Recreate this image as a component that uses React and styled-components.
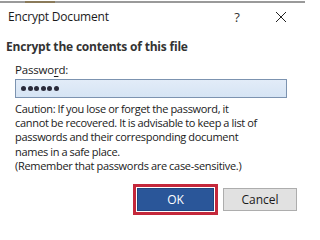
import React from 'react';
import styled, { createGlobalStyle } from 'styled-components';

const GlobalStyle = createGlobalStyle`
  html, body {
    margin: 0;
    padding: 0;
    background: #ffffff;
  }
  body {
    font-family: "Open Sans", "Noto Sans", sans-serif;
    color: #1a1a1a;
  }
`;

const Dialog = styled.div`
  width: 305px;
  height: 225px;
  background: #ffffff;
  overflow: hidden;
  display: flex;
  flex-direction: column;
`;

const TopEdge = styled.div`
  height: 2px;
  margin-top: 1px;
  background: linear-gradient(90deg, #9a9a9a 0, #9a9a9a 25px, #8a7a5a 25px, #8a7a5a 55px, #9a9a9a 55px);
`;

const TitleBar = styled.div`
  display: flex;
  align-items: center;
  height: 27px;
  padding-left: 8px;
`;

const Title = styled.div`
  flex: 1;
  font-size: 12px;
  letter-spacing: -0.2px;
  color: #1a1a1a;
`;

const TitleButton = styled.button`
  border: none;
  background: none;
  padding: 0;
  width: ${p => p.$w}px;
  font-family: inherit;
  font-size: 13px;
  color: #333;
  display: flex;
  align-items: center;
  justify-content: center;
`;

const Body = styled.div`
  padding: 8px 8px 0 6px;
  display: flex;
  flex-direction: column;
`;

const Heading = styled.div`
  font-size: 12px;
  font-weight: 700;
  letter-spacing: -0.2px;
  color: #333;
`;

const Group = styled.div`
  padding-left: 9px;
  padding-right: 10px;
  display: flex;
  flex-direction: column;
`;

const Label = styled.label`
  margin-top: 7px;
  font-size: 11.5px;
  letter-spacing: -0.2px;
  color: #1a1a1a;
  u {
    text-decoration-thickness: 1px;
    text-underline-offset: 2px;
  }
`;

const Input = styled.div`
  margin-top: 2px;
  height: 17px;
  border: 1px solid #7c93b0;
  background: linear-gradient(180deg, #e2ecf8 0%, #d6e4f4 100%);
  display: flex;
  align-items: center;
  padding-left: 5px;
  gap: 1.5px;
`;

const Dot = styled.span`
  width: 5px;
  height: 5px;
  border-radius: 50%;
  background: #2a2a3a;
`;

const Caution = styled.p`
  margin: 4px 0 0;
  font-size: 11px;
  line-height: 14.2px;
  letter-spacing: -0.3px;
  word-spacing: -0.3px;
  color: #1a1a1a;
`;

const Actions = styled.div`
  display: flex;
  justify-content: flex-end;
  align-items: center;
  gap: 5px;
  padding-right: 8px;
  margin-top: 11px;
`;

const Focus = styled.div`
  border: 3px solid #c4283b;
  padding: 1px;
  display: flex;
`;

const Button = styled.button`
  width: ${p => p.$w}px;
  height: 23px;
  font-family: inherit;
  font-size: 12px;
  border: 1px solid ${p => (p.$primary ? '#1f467f' : '#adadad')};
  background: ${p => (p.$primary ? '#2a5699' : '#e1e1e1')};
  color: ${p => (p.$primary ? '#ffffff' : '#1a1a1a')};
  padding: 0;
`;

export default function App() {
  return (
    <>
      <GlobalStyle />
      <Dialog>
        <TopEdge />
        <TitleBar>
          <Title>Encrypt Document</Title>
          <TitleButton $w={40}>?</TitleButton>
          <TitleButton $w={48}>
            <svg width="12" height="12" viewBox="0 0 12 12">
              <path d="M1 1L11 11M11 1L1 11" stroke="#222" strokeWidth="1" />
            </svg>
          </TitleButton>
        </TitleBar>
        <Body>
          <Heading>Encrypt the contents of this file</Heading>
          <Group>
            <Label>
              Passwo<u>r</u>d:
            </Label>
            <Input>
              {Array.from({ length: 6 }).map((_, i) => (
                <Dot key={i} />
              ))}
            </Input>
            <Caution>
              Caution: If you lose or forget the password, it
              <br />
              cannot be recovered. It is advisable to keep a list of
              <br />
              passwords and their corresponding document
              <br />
              names in a safe place.
              <br />
              (Remember that passwords are case-sensitive.)
            </Caution>
          </Group>
        </Body>
        <Actions>
          <Focus>
            <Button $primary $w={77}>OK</Button>
          </Focus>
          <Button $w={74}>Cancel</Button>
        </Actions>
      </Dialog>
    </>
  );
}
